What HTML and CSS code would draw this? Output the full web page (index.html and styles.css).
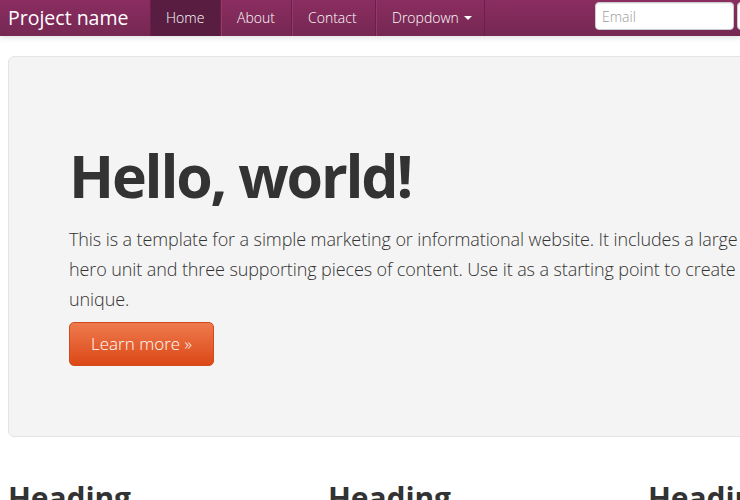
FILE: index.html
```html
<!DOCTYPE html>
<html>
<head>
<meta charset="utf-8">
<link rel="stylesheet" href="styles.css">
</head>
<body>
<div class="navbar">
  <div class="nav-inner">
    <a class="brand">Project name</a>
    <ul class="nav">
      <li class="active"><a>Home</a></li>
      <li><a>About</a></li>
      <li><a>Contact</a></li>
      <li><a>Dropdown <span class="caret"></span></a></li>
    </ul>
    <form class="nav-form">
      <input class="field" type="text" placeholder="Email">
      <input class="field" type="password" placeholder="Password">
    </form>
  </div>
</div>
<div class="container">
  <div class="hero">
    <h1>Hello, world!</h1>
    <p>This is a template for a simple marketing or informational website. It includes a large callout called the<br>hero unit and three supporting pieces of content. Use it as a starting point to create something more<br>unique.</p>
    <a class="btn">Learn more &raquo;</a>
  </div>
  <div class="row">
    <div class="span"><h2>Heading</h2></div>
    <div class="span"><h2>Heading</h2></div>
    <div class="span"><h2>Heading</h2></div>
  </div>
</div>
</body>
</html>
```
FILE: styles.css
```css
html, body {
  margin: 0;
  padding: 0;
  overflow: hidden;
}
body {
  font-family: "Open Sans", "DejaVu Sans", sans-serif;
  color: #333;
  background: #fff;
  width: 740px;
  height: 500px;
}
.navbar {
  height: 36px;
  background: linear-gradient(to bottom, #8b2d61, #752852);
  box-shadow: 0 1px 6px rgba(0,0,0,0.15);
  position: relative;
  z-index: 2;
}
.nav-inner {
  display: flex;
  align-items: stretch;
  height: 36px;
  padding-left: 8px;
  width: 1000px;
}
.brand {
  color: #fff;
  font-size: 19.5px;
  font-weight: 500;
  line-height: 36px;
  width: 142px;
  white-space: nowrap;
}
.nav {
  display: flex;
  list-style: none;
  margin: 0;
  padding: 0;
}
.nav li {
  display: flex;
  box-sizing: border-box;
  border-right: 1px solid #6b2147;
  border-left: 1px solid #96386c;
  white-space: nowrap;
}
.nav li:first-child { border-left: 1px solid #6b2147; }
.nav li:nth-child(1) { width: 71px; }
.nav li:nth-child(2) { width: 71px; }
.nav li:nth-child(3) { width: 84px; }
.nav li:nth-child(4) { width: 109px; }
.nav li a {
  color: #fff;
  font-size: 14px;
  font-weight: 300;
  line-height: 36px;
  padding-left: 15px;
}
.nav li.active { background: #581d40; }
.caret {
  display: inline-block;
  width: 0;
  height: 0;
  border-left: 4px solid transparent;
  border-right: 4px solid transparent;
  border-top: 4px solid #fff;
  vertical-align: middle;
  margin-left: 2px;
  margin-top: -3px;
}
.nav-form {
  display: flex;
  gap: 3px;
  margin: 0 0 0 110px;
  padding-top: 2px;
}
.field {
  box-sizing: border-box;
  width: 139px;
  height: 28px;
  border: 1px solid #ccc;
  border-radius: 4px;
  background: #fff;
  padding: 4px 6px;
  font-family: inherit;
  font-size: 14px;
  font-weight: 300;
  color: #555;
  box-shadow: inset 0 1px 1px rgba(0,0,0,0.075);
}
.field::placeholder { color: #999; }
.container {
  width: 940px;
  margin-left: 8px;
  padding-top: 20px;
}
.hero {
  background: #f4f4f4;
  border: 1px solid #e4e4e4;
  border-radius: 6px;
  padding: 60px;
  height: 259px;
  margin-bottom: 30px;
}
.hero h1 {
  font-size: 59px;
  font-weight: 700;
  letter-spacing: -2.2px;
  line-height: 1;
  margin: 29px 0 19px;
  color: #333;
}
.hero p {
  font-size: 18px;
  font-weight: 300;
  line-height: 30px;
  letter-spacing: -0.1px;
  margin: 0 0 8px;
  color: #333;
  white-space: nowrap;
}
.btn {
  display: inline-block;
  box-sizing: border-box;
  width: 145px;
  height: 44px;
  line-height: 42px;
  text-align: center;
  color: #fff;
  font-size: 17px;
  font-weight: 300;
  border-radius: 5px;
  background: linear-gradient(to bottom, #ee7a4e, #dc4816);
  border: 1px solid #d24a1b;
}
.row {
  display: flex;
  gap: 20px;
}
.span { width: 300px; }
.span h2 {
  font-size: 30px;
  font-weight: 700;
  letter-spacing: -0.1px;
  margin: 11px 0 0;
  line-height: 40px;
}
```
